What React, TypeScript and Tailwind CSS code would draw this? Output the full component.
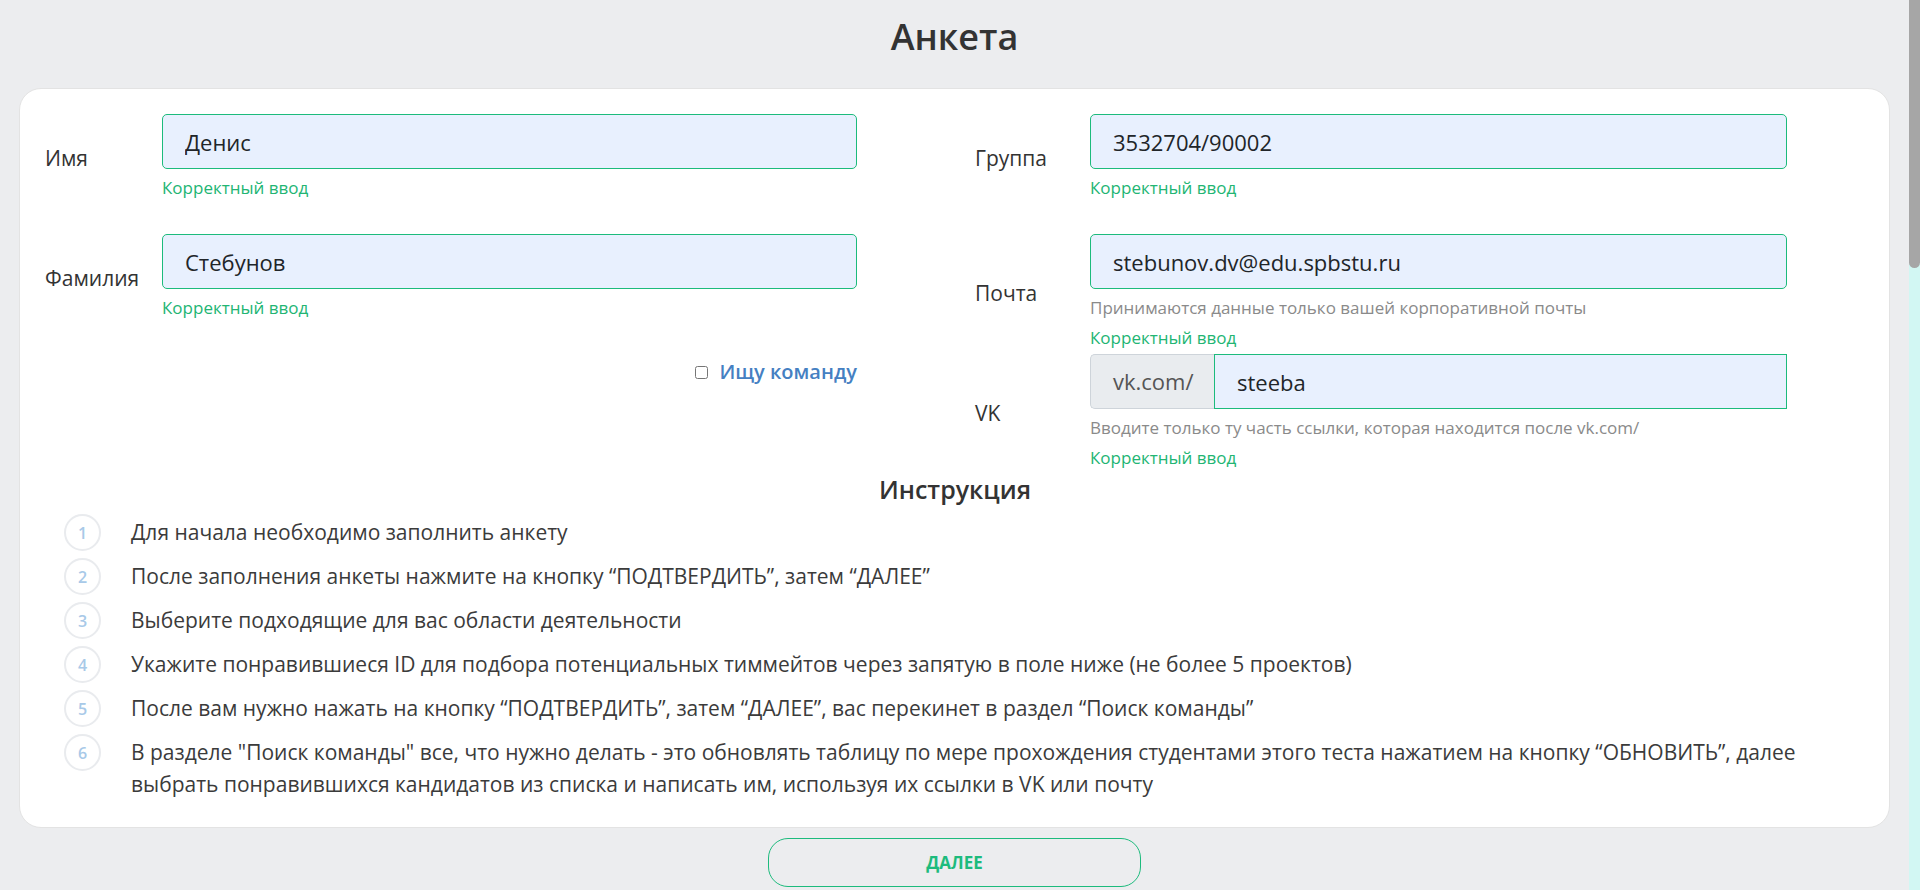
import React from "react";

type FieldProps = {
  label: string;
  value: string;
  labelW: string;
  boxW: string;
  help?: string;
  prefix?: string;
};

function Field({ label, value, labelW, boxW, help, prefix }: FieldProps) {
  return (
    <div className="flex items-center">
      <label className={`${labelW} text-[21px] text-[#333]`}>{label}</label>

      <div className={boxW}>
        {prefix ? (
          <div className="flex h-[55px]">
            <span className="flex w-[124px] items-center rounded-l-[5px] border border-r-0 border-[#ced4da] bg-[#e9ecef] px-[22px] text-[22px] text-[#555]">
              {prefix}
            </span>
            <input
              readOnly
              value={value}
              className="h-full flex-1 border border-[#1cbb7c] bg-[#e8f0fe] px-[22px] text-[22px] text-[#212529] outline-none"
            />
          </div>
        ) : (
          <input
            readOnly
            value={value}
            className="h-[55px] w-full rounded-[5px] border border-[#1cbb7c] bg-[#e8f0fe] px-[22px] text-[22px] text-[#212529] outline-none"
          />
        )}

        <div className="mt-[4px] text-[17px] leading-[30px]">
          {help && <p className="text-[#8a8a8a]">{help}</p>}
          <p className="text-[#22b573]">Корректный ввод</p>
        </div>
      </div>
    </div>
  );
}

const steps = [
  "Для начала необходимо заполнить анкету",
  "После заполнения анкеты нажмите на кнопку “ПОДТВЕРДИТЬ”, затем “ДАЛЕЕ”",
  "Выберите подходящие для вас области деятельности",
  "Укажите понравившиеся ID для подбора потенциальных тиммейтов через запятую в поле ниже (не более 5 проектов)",
  "После вам нужно нажать на кнопку “ПОДТВЕРДИТЬ”, затем “ДАЛЕЕ”, вас перекинет в раздел “Поиск команды”",
  "В разделе \"Поиск команды\" все, что нужно делать - это обновлять таблицу по мере прохождения студентами этого теста нажатием на кнопку “ОБНОВИТЬ”, далее выбрать понравившихся кандидатов из списка и написать им, используя их ссылки в VK или почту",
];

export default function App() {
  return (
    <div className="flex h-[890px] overflow-hidden bg-[#ecedef] font-['Open_Sans',sans-serif]">
      <main className="min-w-0 flex-1">
        <h1 className="flex h-[74px] items-center justify-center text-[36px] font-semibold text-[#333]">
          Анкета
        </h1>

        <section className="mx-[19px] mt-[14px] rounded-[22px] border border-[#e3e3e3] bg-white pb-[27px] pl-[25px] pr-[24px] pt-[25px]">
          <div className="flex">
            {/* left column */}
            <div className="w-[930px]">
              <div className="h-[120px]">
                <Field label="Имя" value="Денис" labelW="w-[117px]" boxW="w-[695px]" />
              </div>
              <div className="h-[120px]">
                <Field label="Фамилия" value="Стебунов" labelW="w-[117px]" boxW="w-[695px]" />
              </div>
              <div className="mt-[3px] flex w-[812px] items-center justify-end gap-[11px]">
                <input type="checkbox" className="h-[13px] w-[13px]" />
                <span className="text-[20px] font-semibold leading-[30px] text-[#4580c2]">
                  Ищу команду
                </span>
              </div>
            </div>

            {/* right column */}
            <div className="flex-1">
              <div className="h-[120px]">
                <Field label="Группа" value="3532704/90002" labelW="w-[115px]" boxW="w-[697px]" />
              </div>
              <div className="h-[120px]">
                <Field
                  label="Почта"
                  value="stebunov.dv@edu.spbstu.ru"
                  labelW="w-[115px]"
                  boxW="w-[697px]"
                  help="Принимаются данные только вашей корпоративной почты"
                />
              </div>
              <Field
                label="VK"
                value="steeba"
                prefix="vk.com/"
                labelW="w-[115px]"
                boxW="w-[697px]"
                help="Вводите только ту часть ссылки, которая находится после vk.com/"
              />
            </div>
          </div>

          <h2 className="text-center text-[25px] font-semibold leading-[32px] text-[#333]">
            Инструкция
          </h2>

          <ol className="mt-[9px] flex flex-col gap-[7px] pl-[19px]">
            {steps.map((s, i) => (
              <li key={i} className="flex items-start gap-[30px]">
                <span className="flex h-[37px] w-[37px] shrink-0 items-center justify-center rounded-full border-2 border-[#e9ebee] text-[16px] font-semibold text-[#a8c9e8]">
                  {i + 1}
                </span>
                <p className="mt-[2px] max-w-[1700px] text-[21px] leading-[32px] text-[#3b3b3b]">
                  {s}
                </p>
              </li>
            ))}
          </ol>
        </section>

        <div className="mt-[10px] flex justify-center">
          <button className="h-[49px] w-[373px] rounded-[20px] border border-[#1dbb7d] text-[17px] font-bold text-[#1dbb7d]">
            ДАЛЕЕ
          </button>
        </div>
      </main>

      <div className="w-[11px] bg-[#d2f7f3]">
        <div className="h-[268px] rounded-b-full bg-[#a6a6a6]" />
      </div>
    </div>
  );
}
